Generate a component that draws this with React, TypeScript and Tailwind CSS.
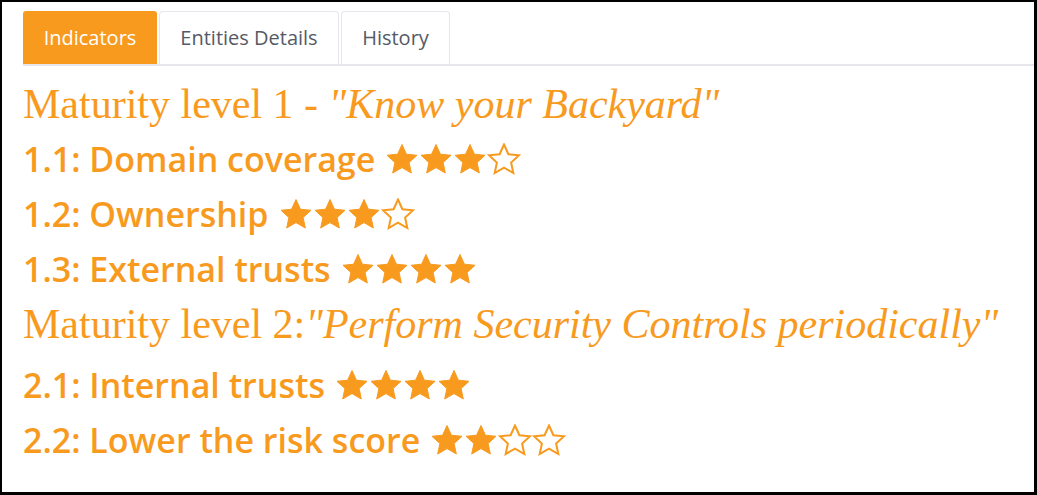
import React from "react";

const ORANGE = "#f89a1e";

function Star({ filled }: { filled: boolean }) {
  return (
    <svg width="34" height="33" viewBox="0 0 34 33" className="shrink-0">
      <path
        d="M17 1.5 L21.4 11.2 L32 12.3 L24.1 19.5 L26.3 30 L17 24.6 L7.7 30 L9.9 19.5 L2 12.3 L12.6 11.2 Z"
        fill={filled ? ORANGE : "#ffffff"}
        stroke={ORANGE}
        strokeWidth={filled ? 1 : 2}
        strokeLinejoin="miter"
      />
    </svg>
  );
}

function Stars({ n }: { n: number }) {
  return (
    <span className="ml-[10px] inline-flex items-center">
      {[0, 1, 2, 3].map((i) => (
        <Star key={i} filled={i < n} />
      ))}
    </span>
  );
}

function Item({ label, n, extra = "" }: { label: string; n: number; extra?: string }) {
  return (
    <div
      className={
        "flex h-[55px] items-center font-['Open_Sans',sans-serif] text-[34px] font-semibold text-[#f89a1e] " +
        extra
      }
    >
      <span>{label}</span>
      <Stars n={n} />
    </div>
  );
}

export default function App() {
  return (
    <div className="h-[495px] w-[1037px] overflow-hidden bg-white">
      <div className="h-full w-full border-2 border-r-[3px] border-b-[3px] border-black bg-white pl-[21px] pt-[9px]">
        <div className="flex items-end gap-[2px] border-b-2 border-[#e6e6ec] font-['Open_Sans',sans-serif] text-[20px]">
          <div className="flex h-[53px] w-[134px] items-center justify-center rounded-t-[3px] bg-[#f89a1e] text-white">
            Indicators
          </div>
          <div className="flex h-[53px] w-[180px] items-center justify-center rounded-t-[4px] border border-b-0 border-[#e6e6ec] text-[#555a66]">
            Entities Details
          </div>
          <div className="flex h-[53px] w-[109px] items-center justify-center rounded-t-[4px] border border-b-0 border-[#e6e6ec] text-[#555a66]">
            History
          </div>
        </div>
        <div className="pt-[10px]">
          <div className="flex h-[56px] items-center whitespace-nowrap font-['Liberation_Serif',serif] text-[42px] text-[#f89a1e]">
            <span>Maturity level 1 -&nbsp;</span>
            <span className="italic">"Know your Backyard"</span>
          </div>
          <Item label="1.1: Domain coverage" n={3} />
          <Item label="1.2: Ownership" n={3} />
          <Item label="1.3: External trusts" n={4} />
          <div className="flex h-[54px] items-center whitespace-nowrap font-['Liberation_Serif',serif] text-[42px] text-[#f89a1e]">
            <span>Maturity level 2:</span>
            <span className="italic">"Perform Security Controls periodically"</span>
          </div>
          <Item label="2.1: Internal trusts" n={4} extra="mt-[7px]" />
          <Item label="2.2: Lower the risk score" n={2} />
        </div>
      </div>
    </div>
  );
}
